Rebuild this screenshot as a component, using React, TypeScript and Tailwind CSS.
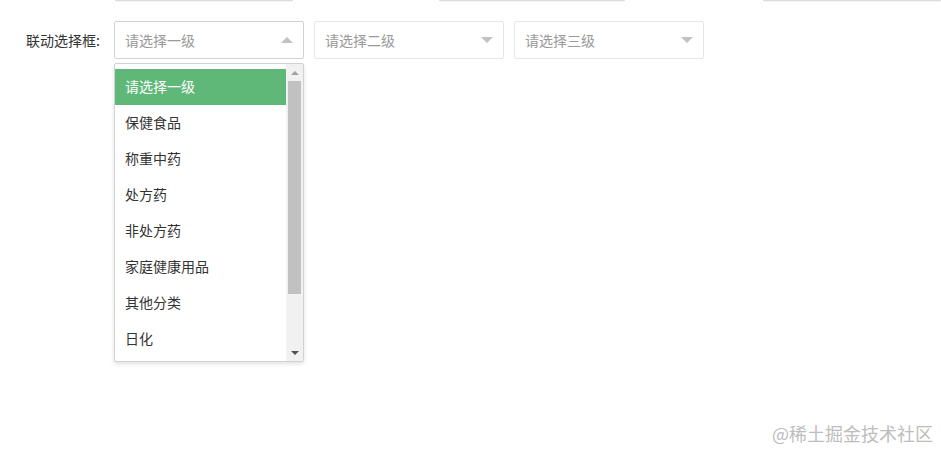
import React from "react"

const options = ["请选择一级", "保健食品", "称重中药", "处方药", "非处方药", "家庭健康用品", "其他分类", "日化"]

function Caret({ up }: { up?: boolean }) {
  return up ? (
    <span className="w-0 h-0 border-x-[6px] border-x-transparent border-b-[6px] border-b-[#c2c2c2]" />
  ) : (
    <span className="w-0 h-0 border-x-[6px] border-x-transparent border-t-[6px] border-t-[#c2c2c2]" />
  )
}

function SelectBox({ text, open }: { text: string; open?: boolean }) {
  return (
    <div
      className={`flex items-center justify-between w-[190px] h-[38px] pl-[10px] pr-[10px] border rounded-[2px] bg-white ${
        open ? "border-[#d2d2d2]" : "border-[#e6e6e6]"
      }`}
    >
      <span className="text-[14px] leading-[20px] -mt-[1px] text-[#999]">{text}</span>
      <Caret up={open} />
    </div>
  )
}

export default function App() {
  return (
    <div
      className="relative w-full h-[452px] bg-white overflow-hidden"
      style={{ fontFamily: '"Microsoft YaHei", "Noto Sans CJK SC", "Noto Sans", sans-serif' }}
    >
      {/* bottoms of the row above */}
      <div className="flex h-[2px]">
        <div className="ml-[115px] w-[178px] h-[2px] bg-[#f3f3f3] border-t border-[#dcdcdc] rounded-b-[2px]" />
        <div className="ml-[146px] w-[186px] h-[2px] bg-[#f3f3f3] border-t border-[#dcdcdc] rounded-b-[2px]" />
        <div className="ml-[138px] w-[178px] h-[2px] bg-[#f3f3f3] border-t border-[#dcdcdc] rounded-b-[2px]" />
      </div>

      <div className="flex items-center mt-[19px] h-[38px]">
        <label className="w-[114px] pr-[14px] text-right text-[14px] leading-[20px] -mt-[1px] text-[#333]">联动选择框:</label>
        <div className="flex gap-[10px]">
          <SelectBox text="请选择一级" open />
          <SelectBox text="请选择二级" />
          <SelectBox text="请选择三级" />
        </div>
      </div>

      {/* open dropdown */}
      <div className="absolute left-[114px] top-[63px] w-[190px] h-[299px] flex bg-white border border-[#d2d2d2] rounded-[2px] shadow-[0_2px_4px_rgba(0,0,0,0.12)]">
        <div className="flex-1 py-[5px] overflow-hidden">
          {options.map((o, i) => (
            <div
              key={o}
              className={`h-[36px] leading-[35px] px-[10px] text-[14px] ${
                i === 0 ? "bg-[#5fb878] text-white" : "text-[#333]"
              }`}
            >
              {o}
            </div>
          ))}
        </div>
        <div className="w-[17px] flex flex-col bg-[#f1f1f1]">
          <div className="h-[17px] flex items-center justify-center">
            <span className="w-0 h-0 border-x-[4px] border-x-transparent border-b-[4px] border-b-[#a3a3a3]" />
          </div>
          <div className="mx-[2px] h-[213px] bg-[#c1c1c1]" />
          <div className="flex-1" />
          <div className="h-[17px] flex items-center justify-center">
            <span className="w-0 h-0 border-x-[4px] border-x-transparent border-t-[4px] border-t-[#505050]" />
          </div>
        </div>
      </div>

      <div className="absolute right-[8px] top-[420px] text-[18px] leading-[26px] text-[#bdbdbd]">
        @稀土掘金技术社区
      </div>
    </div>
  )
}
